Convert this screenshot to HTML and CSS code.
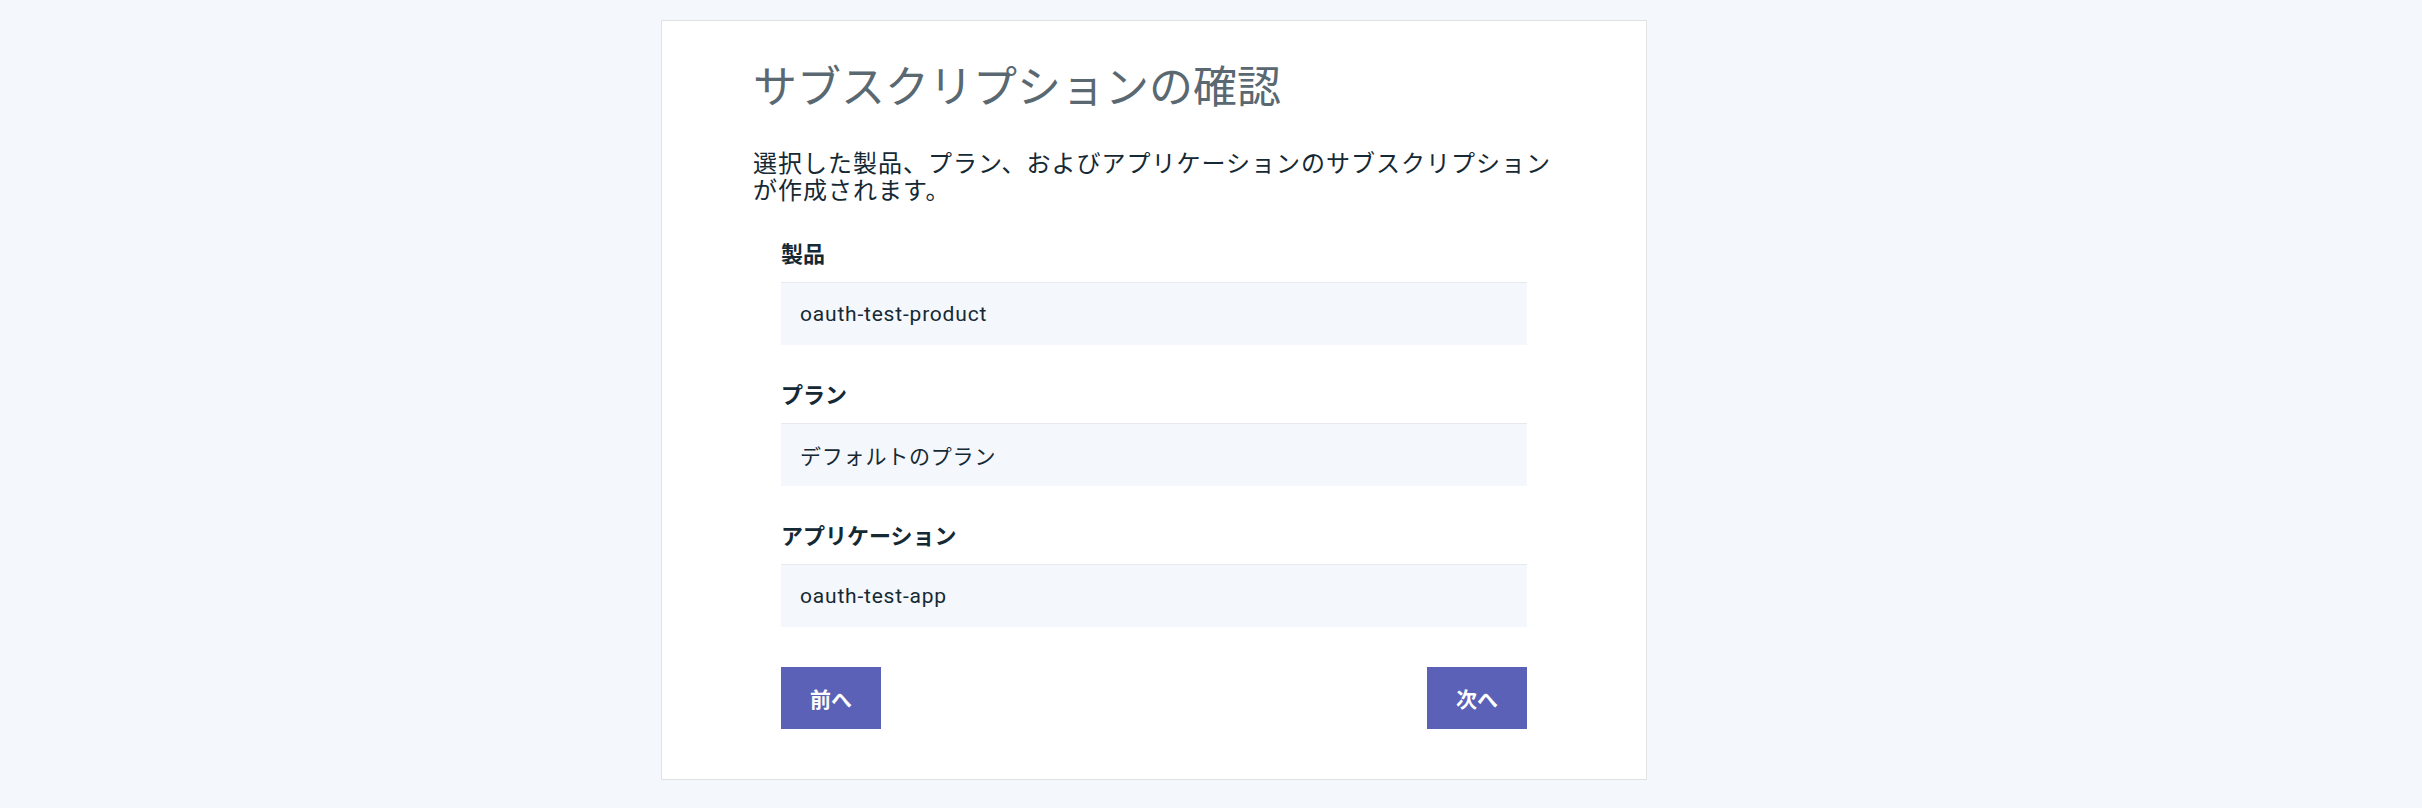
FILE: index.html
```html
<!DOCTYPE html>
<html lang="ja">
<head>
<meta charset="utf-8">
<title>サブスクリプションの確認</title>
<link rel="stylesheet" href="styles.css">
</head>
<body>
<main class="page">
  <section class="card">
    <h1 class="title">サブスクリプションの確認</h1>
    <p class="intro">選択した製品、プラン、およびアプリケーションのサブスクリプションが作成されます。</p>
    <div class="fields">
      <div class="field">
        <div class="label">製品</div>
        <div class="value">oauth-test-product</div>
      </div>
      <div class="field">
        <div class="label">プラン</div>
        <div class="value">デフォルトのプラン</div>
      </div>
      <div class="field">
        <div class="label">アプリケーション</div>
        <div class="value">oauth-test-app</div>
      </div>
      <div class="actions">
        <button class="btn" type="button">前へ</button>
        <button class="btn" type="button">次へ</button>
      </div>
    </div>
  </section>
</main>
</body>
</html>
```
FILE: styles.css
```css
html, body {
  margin: 0;
  padding: 0;
}
body {
  background: #f4f7fb;
  font-family: "Roboto", "Noto Sans CJK JP", sans-serif;
  color: #152935;
}
.page {
  padding: 20px 0 0 661px;
}
.card {
  box-sizing: border-box;
  width: 986px;
  background: #ffffff;
  border: 1px solid #dfe3e6;
  padding: 37px 92px 50px 91px;
}
.title {
  margin: 0;
  font-size: 44px;
  line-height: 52px;
  font-weight: 400;
  color: #5a6872;
  font-family: "Noto Sans CJK JP", sans-serif;
}
.intro {
  margin: 38px 0 0;
  font-size: 24px;
  line-height: 27px;
  letter-spacing: 1px;
  font-family: "Noto Sans CJK JP", sans-serif;
  color: #152935;
}
.fields {
  margin: 37px 27px 0 28px;
  display: flex;
  flex-direction: column;
}
.field {
  display: flex;
  flex-direction: column;
  margin-bottom: 35px;
}
.label {
  font-family: "Noto Sans CJK JP", sans-serif;
  font-weight: 700;
  font-size: 22px;
  line-height: 26px;
  margin-bottom: 17px;
  color: #152935;
}
.value {
  box-sizing: border-box;
  height: 63px;
  display: flex;
  align-items: center;
  padding: 0 19px;
  background: #f4f7fb;
  border-top: 1px solid #e6eaee;
  font-size: 21px;
  letter-spacing: 0.8px;
  color: #152935;
}
.actions {
  display: flex;
  justify-content: space-between;
  margin-top: 5px;
}
.btn {
  width: 100px;
  height: 62px;
  border: 0;
  padding: 0;
  background: #5a61b6;
  color: #ffffff;
  font-family: "Noto Sans CJK JP", sans-serif;
  font-weight: 700;
  font-size: 21px;
  cursor: pointer;
}
```
